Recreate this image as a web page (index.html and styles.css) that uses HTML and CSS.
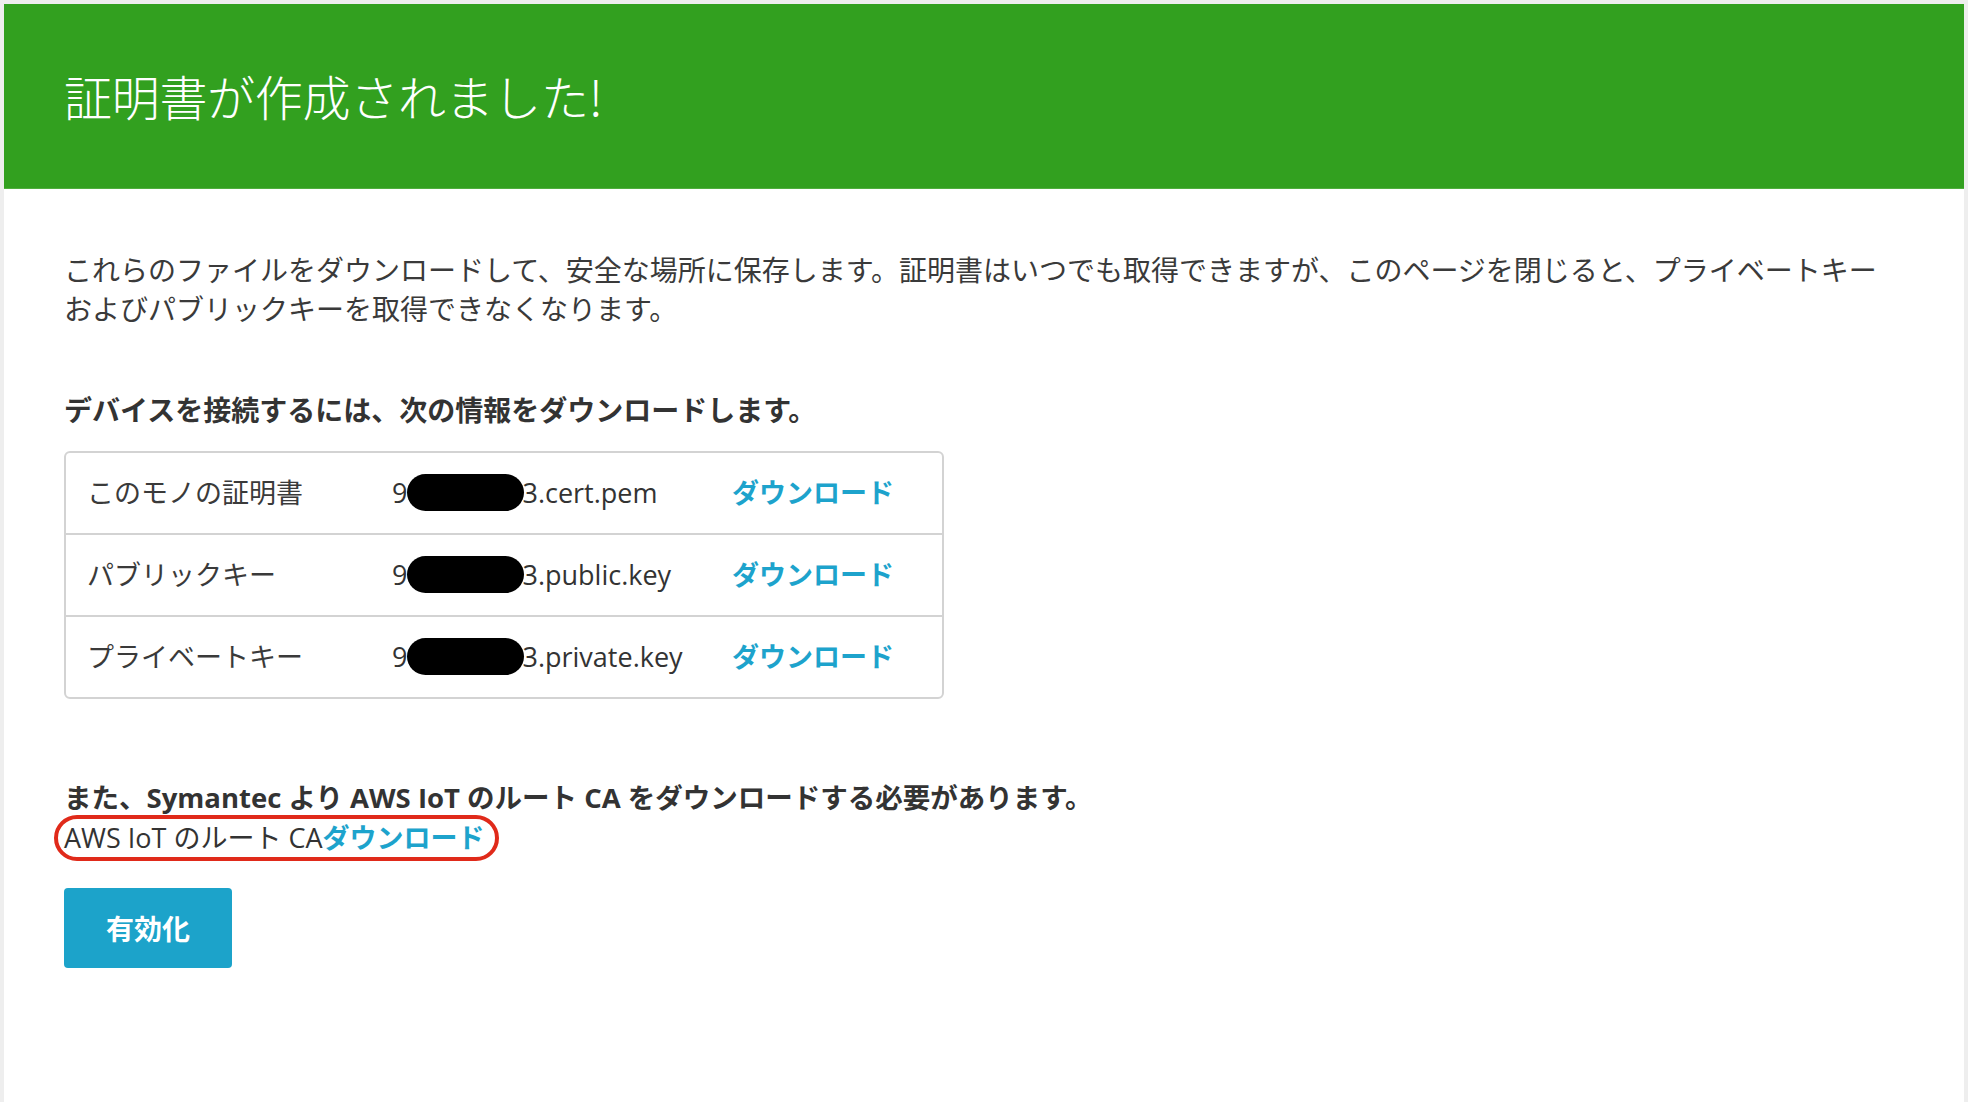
FILE: index.html
```html
<!DOCTYPE html>
<html lang="ja">
<head>
<meta charset="utf-8">
<title>証明書が作成されました!</title>
<link rel="stylesheet" href="styles.css">
</head>
<body>
<div class="card">
  <header class="banner">
    <h1 class="banner-title">証明書が作成されました!</h1>
  </header>
  <main class="content">
    <p class="intro">これらのファイルをダウンロードして、安全な場所に保存します。証明書はいつでも取得できますが、このページを閉じると、プライベートキーおよびパブリックキーを取得できなくなります。</p>
    <h2 class="section-title">デバイスを接続するには、次の情報をダウンロードします。</h2>
    <div class="files">
      <div class="file-row">
        <span class="file-label">このモノの証明書</span>
        <span class="file-name">9<span class="redact"></span>3.cert.pem</span>
        <a class="link" href="#">ダウンロード</a>
      </div>
      <div class="file-row">
        <span class="file-label">パブリックキー</span>
        <span class="file-name">9<span class="redact"></span>3.public.key</span>
        <a class="link" href="#">ダウンロード</a>
      </div>
      <div class="file-row">
        <span class="file-label">プライベートキー</span>
        <span class="file-name">9<span class="redact"></span>3.private.key</span>
        <a class="link" href="#">ダウンロード</a>
      </div>
    </div>
    <div class="root-ca">
      <p class="root-ca-title">また、Symantec より AWS IoT のルート CA をダウンロードする必要があります。</p>
      <p class="root-ca-line"><span class="highlight">AWS IoT のルート CA<a class="link" href="#">ダウンロード</a></span></p>
    </div>
    <button class="primary-btn" type="button">有効化</button>
  </main>
</div>
</body>
</html>
```
FILE: styles.css
```css
html, body {
  margin: 0;
  padding: 0;
}
body {
  background: #eeeeee;
  font-family: "Open Sans", "Noto Sans CJK JP", sans-serif;
  color: #333333;
}
.card {
  margin: 4px 4px 0 4px;
  background: #ffffff;
  min-height: 1098px;
}
.banner {
  background: #32a01f;
  height: 185px;
  display: flex;
  align-items: center;
  padding: 0 60px;
  border-bottom: 1px solid #4fae3d;
  box-sizing: border-box;
}
.banner-title {
  margin: 0;
  font-family: "Noto Sans CJK JP", "Open Sans", sans-serif;
  font-weight: 300;
  font-size: 48px;
  color: #ffffff;
  line-height: 1;
  letter-spacing: -0.3px;
  padding-bottom: 2px;
}
.content {
  padding: 61px 60px 0 60px;
  font-size: 28px;
  line-height: 39px;
}
.intro {
  margin: 0;
  font-family: "Noto Sans CJK JP", sans-serif;
  font-weight: 400;
  color: #3a3a3a;
}
.section-title {
  margin: 63px 0 21px 0;
  font-size: 28px;
  line-height: 39px;
  font-weight: 700;
  color: #333333;
}
.files {
  width: 880px;
  border: 2px solid #d3d3d3;
  border-radius: 6px;
  box-sizing: border-box;
}
.file-row {
  display: grid;
  grid-template-columns: 305px 340px 1fr;
  align-items: center;
  height: 82px;
  padding-left: 21px;
  padding-bottom: 2px;
  box-sizing: border-box;
  border-top: 2px solid #d3d3d3;
}
.file-row:first-child {
  border-top: none;
  height: 80px;
}
.file-label {
  color: #3a3a3a;
  font-size: 27px;
}
.file-name {
  display: flex;
  align-items: center;
  color: #333333;
  font-size: 27px;
}
.redact {
  display: inline-block;
  width: 117px;
  height: 37px;
  background: #000000;
  border-radius: 19px;
  margin: 0 -2px 0 0;
}
.link {
  color: #1da3cc;
  font-weight: 700;
  text-decoration: none;
  font-size: 27px;
}
.root-ca {
  margin-top: 79px;
}
.root-ca p {
  margin: 0;
}
.root-ca-title {
  font-weight: 700;
  font-size: 27.5px;
  color: #333333;
}
.root-ca-line {
  color: #333333;
  font-size: 27px;
  line-height: 36px;
  margin-top: 0;
}
.highlight {
  display: inline-block;
  border: 4px solid #e02a1a;
  border-radius: 24px;
  padding: 0 10px 0 6px;
  margin-left: -10px;
  margin-top: -2px;
  line-height: 38px;
}
.primary-btn {
  display: block;
  margin-top: 27px;
  width: 168px;
  height: 80px;
  border: none;
  border-radius: 4px;
  background: #1ca3ca;
  color: #ffffff;
  font-family: "Noto Sans CJK JP", sans-serif;
  font-weight: 700;
  font-size: 28px;
  cursor: pointer;
}
```
